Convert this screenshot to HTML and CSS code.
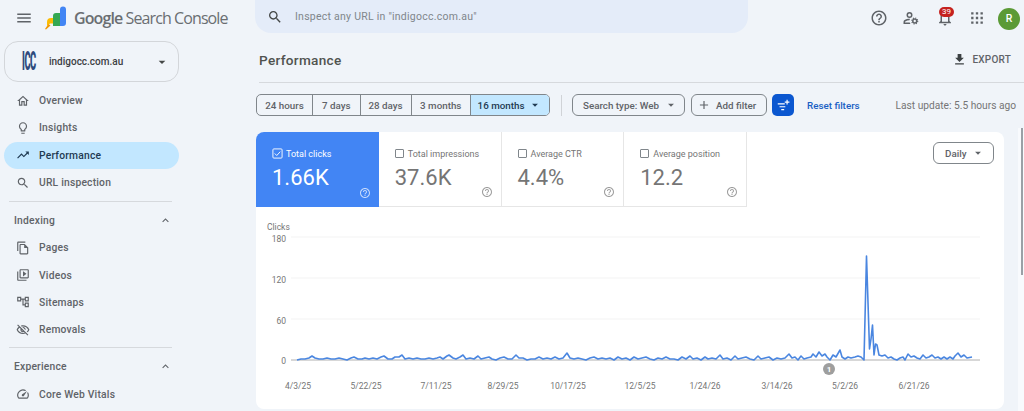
FILE: index.html
```html
<!DOCTYPE html>
<html lang="en">

<head>
  <meta charset="UTF-8" />
  <title>Performance - Google Search Console</title>
  <link rel="stylesheet" href="styles.css">
</head>

<body>
  <svg class="defs" width="0" height="0">
    <symbol id="caret" viewBox="0 0 24 24"><path d="M7 10l5 5 5-5z" /></symbol>
    <symbol id="chevron" viewBox="0 0 24 24"><path d="M12 8l-6 6 1.41 1.41L12 10.83l4.59 4.58L18 14z" /></symbol>
    <symbol id="help" viewBox="0 0 24 24"><path d="M11 18h2v-2h-2v2zm1-16C6.48 2 2 6.48 2 12s4.48 10 10 10 10-4.48 10-10S17.52 2 12 2zm0 18c-4.41 0-8-3.59-8-8s3.59-8 8-8 8 3.59 8 8-3.59 8-8 8zm0-14c-2.21 0-4 1.79-4 4h2c0-1.1.9-2 2-2s2 .9 2 2c0 2-3 1.75-3 5h2c0-2.25 3-2.5 3-5 0-2.21-1.79-4-4-4z" /></symbol>
  </svg>

  <div class="app">
    <aside class="sidebar">
      <div class="brand">
        <svg class="menu-icon" viewBox="0 0 24 24"><path d="M3 18h18v-2H3v2zm0-5h18v-2H3v2zm0-7v2h18V6H3z" /></svg>
        <svg class="logo" viewBox="0 0 24 24">
          <path fill="#fbbc04" d="M3 20l3-2.500h5V12H7a4 4 0 0 0-4 4z" />
          <path fill="#f29900" d="M1 23l3.500-5 2 1.500L2 23.500z" />
          <path fill="#34a853" d="M9 20V10a3 3 0 0 1 3-3h4v13z" />
          <path fill="#4285f4" d="M16 20V3.500a3 3 0 0 1 3-3 3 3 0 0 1 3 3V17a3 3 0 0 1-3 3z" />
        </svg>
        <span class="brand-name"><b>Google</b> Search Console</span>
      </div>

      <div class="property">
        <span class="property-logo">ICC</span>
        <span class="property-name">indigocc.com.au</span>
        <svg class="caret"><use href="#caret" /></svg>
      </div>

      <nav class="nav">
        <a class="nav-item">
          <svg viewBox="0 0 24 24"><path d="M12 5.690l5 4.500V18h-2v-6H9v6H7v-7.810l5-4.500M12 3L2 12h3v8h6v-6h2v6h6v-8h3L12 3z" /></svg>
          Overview
        </a>
        <a class="nav-item">
          <svg viewBox="0 0 24 24"><path d="M9 21c0 .55.45 1 1 1h4c.55 0 1-.45 1-1v-1H9v1zm3-19C8.140 2 5 5.140 5 9c0 2.380 1.190 4.470 3 5.740V17c0 .55.45 1 1 1h6c.55 0 1-.45 1-1v-2.260c1.810-1.270 3-3.360 3-5.740 0-3.860-3.140-7-7-7zm2.850 11.100l-.85.6V16h-4v-2.300l-.85-.6C7.800 12.160 7 10.630 7 9c0-2.760 2.240-5 5-5s5 2.240 5 5c0 1.630-.8 3.160-2.150 4.100z" /></svg>
          Insights
        </a>
        <a class="nav-item active">
          <svg viewBox="0 0 24 24"><path d="M16 6l2.290 2.290-4.880 4.880-4-4L2 16.590 3.410 18l6-6 4 4 6.300-6.290L22 12V6z" /></svg>
          Performance
        </a>
        <a class="nav-item">
          <svg viewBox="0 0 24 24"><path d="M15.500 14h-.79l-.28-.27C15.410 12.590 16 11.110 16 9.500 16 5.910 13.090 3 9.500 3S3 5.910 3 9.500 5.910 16 9.500 16c1.610 0 3.090-.59 4.230-1.570l.27.28v.79l5 4.990L20.490 19l-4.990-5zm-6 0C7.010 14 5 11.990 5 9.500S7.010 5 9.500 5 14 7.010 14 9.500 11.990 14 9.500 14z" /></svg>
          URL inspection
        </a>
      </nav>

      <div class="nav-group">
        <div class="nav-heading">Indexing <svg><use href="#chevron" /></svg></div>
        <a class="nav-item">
          <svg viewBox="0 0 24 24"><path d="M16 1H4c-1.100 0-2 .9-2 2v14h2V3h12V1zm-1 4H8c-1.100 0-1.990.9-1.990 2L6 21c0 1.100.89 2 1.990 2H19c1.100 0 2-.9 2-2V11l-6-6zM8 21V7h6v5h5v9H8z" /></svg>
          Pages
        </a>
        <a class="nav-item">
          <svg viewBox="0 0 24 24"><path d="M4 6H2v14c0 1.100.9 2 2 2h14v-2H4V6zm16-4H8c-1.100 0-2 .9-2 2v12c0 1.100.9 2 2 2h12c1.100 0 2-.9 2-2V4c0-1.100-.9-2-2-2zm0 14H8V4h12v12zM12 5.500v9l6-4.500z" /></svg>
          Videos
        </a>
        <a class="nav-item">
          <svg viewBox="0 0 24 24"><path d="M22 11V3h-7v3H9V3H2v8h7V8h2v10h4v3h7v-8h-7v3h-2V8h2v3h7zM7 9H4V5h3v4zm10 6h3v4h-3v-4zm0-10h3v4h-3V5z" /></svg>
          Sitemaps
        </a>
        <a class="nav-item">
          <svg viewBox="0 0 24 24"><path d="M12 6c3.790 0 7.170 2.130 8.820 5.500-.59 1.220-1.420 2.270-2.410 3.120l1.410 1.410c1.390-1.230 2.490-2.770 3.180-4.530C21.270 7.110 17 4 12 4c-1.270 0-2.490.2-3.640.57l1.650 1.650C10.660 6.090 11.320 6 12 6zm-1.070 1.140L13 9.210c.57.25 1.030.71 1.280 1.280l2.070 2.070c.08-.34.14-.7.14-1.070C16.500 9.010 14.480 7 12 7c-.37 0-.72.05-1.070.14zM2.010 3.870l2.680 2.680C3.060 7.830 1.770 9.530 1 11.500 2.730 15.890 7 19 12 19c1.520 0 2.980-.29 4.320-.82l3.420 3.420 1.410-1.410L3.420 2.450 2.010 3.870zm7.500 7.500l2.610 2.610c-.04.01-.08.02-.12.02-1.380 0-2.500-1.120-2.500-2.500 0-.05.01-.08.01-.13zm-3.400-3.400l1.750 1.750c-.23.55-.36 1.150-.36 1.780 0 2.480 2.020 4.500 4.500 4.500.63 0 1.230-.13 1.770-.36l.98.98c-.88.24-1.800.38-2.750.38-3.790 0-7.170-2.130-8.820-5.500.7-1.430 1.720-2.610 2.930-3.530z" /></svg>
          Removals
        </a>
      </div>

      <div class="nav-group">
        <div class="nav-heading">Experience <svg><use href="#chevron" /></svg></div>
        <a class="nav-item">
          <svg viewBox="0 0 24 24"><path d="M20.380 8.570l-1.230 1.850a8 8 0 0 1-.22 7.580H5.070A8 8 0 0 1 15.580 6.850l1.850-1.230A10 10 0 0 0 3.350 19a2 2 0 0 0 1.720 1h13.850a2 2 0 0 0 1.740-1 10 10 0 0 0-.27-10.440zm-9.790 6.840a2 2 0 0 0 2.830 0l5.660-8.490-8.490 5.660a2 2 0 0 0 0 2.830z" /></svg>
          Core Web Vitals
        </a>
      </div>
    </aside>

    <main class="main">
      <header class="topbar">
        <div class="search">
          <svg viewBox="0 0 24 24"><path d="M15.500 14h-.79l-.28-.27C15.410 12.590 16 11.110 16 9.500 16 5.910 13.090 3 9.500 3S3 5.910 3 9.500 5.910 16 9.500 16c1.610 0 3.090-.59 4.230-1.570l.27.28v.79l5 4.990L20.490 19l-4.990-5zm-6 0C7.010 14 5 11.990 5 9.500S7.010 5 9.500 5 14 7.010 14 9.500 11.990 14 9.500 14z" /></svg>
          Inspect any URL in "indigocc.com.au"
        </div>
        <div class="top-icons">
          <svg class="top-icon"><use href="#help" /></svg>
          <svg class="top-icon" viewBox="0 0 24 24">
            <path d="M10.670 13.020c-.22-.01-.44-.02-.67-.02-2.420 0-4.680.67-6.610 1.820-.88.52-1.390 1.500-1.390 2.530V20h9.260a7 7 0 0 1-.9-2H4v-.65c0-.35.17-.68.44-.83A10.900 10.900 0 0 1 10 15h.1c.1-.7.3-1.350.57-1.980zM10 12a4 4 0 1 0 0-8 4 4 0 0 0 0 8zm0-6a2 2 0 1 1 0 4 2 2 0 0 1 0-4z" />
            <circle cx="17" cy="16" r="2.600" fill="none" stroke="currentColor" stroke-width="2" />
            <circle cx="17" cy="16" r="4" fill="none" stroke="currentColor" stroke-width="1.500" stroke-dasharray="1.500 1.640" />
          </svg>
          <span class="bell">
            <svg class="top-icon" viewBox="0 0 24 24"><path d="M12 22c1.100 0 2-.9 2-2h-4c0 1.100.9 2 2 2zm6-6v-5c0-3.070-1.630-5.640-4.500-6.320V4c0-.83-.67-1.500-1.500-1.500s-1.500.67-1.500 1.500v.68C7.640 5.360 6 7.920 6 11v5l-2 2v1h16v-1l-2-2zm-2 1H8v-6c0-2.480 1.510-4.500 4-4.500s4 2.020 4 4.500v6z" /></svg>
            <span class="badge">39</span>
          </span>
          <svg class="top-icon apps" viewBox="0 0 12 12">
            <path d="M1 1h2v2H1zM5 1h2v2H5zM9 1h2v2H9zM1 5h2v2H1zM5 5h2v2H5zM9 5h2v2H9zM1 9h2v2H1zM5 9h2v2H5zM9 9h2v2H9z" />
          </svg>
          <span class="avatar">R</span>
        </div>
      </header>

      <div class="page-head">
        <h1>Performance</h1>
        <a class="export">
          <svg viewBox="0 0 24 24"><path d="M19 9h-4V3H9v6H5l7 7 7-7zM5 18v2h14v-2H5z" /></svg>
          EXPORT
        </a>
      </div>

      <div class="toolbar">
        <div class="ranges">
          <span class="range">24 hours</span>
          <span class="range">7 days</span>
          <span class="range">28 days</span>
          <span class="range">3 months</span>
          <span class="range selected">16 months <svg class="caret"><use href="#caret" /></svg></span>
        </div>
        <span class="tool-divider"></span>
        <span class="chip search-type">Search type: Web <svg class="caret"><use href="#caret" /></svg></span>
        <span class="chip add-filter">
          <svg viewBox="0 0 24 24"><path d="M19 13h-6v6h-2v-6H5v-2h6V5h2v6h6z" /></svg>
          Add filter
        </span>
        <span class="filter-btn">
          <svg viewBox="0 0 24 24"><path d="M3 9h12v2H3zM6 14h10v2H6zM9 19h5v2H9zM18 3h2v3h3v2h-3v3h-2V8h-3V6h3z" /></svg>
        </span>
        <a class="reset">Reset filters</a>
        <span class="updated">Last update: 5.5 hours ago</span>
      </div>

      <section class="card">
        <div class="card-top">
          <div class="metric on">
            <div class="metric-label">
              <svg class="check" viewBox="0 0 12 12">
                <rect x="1" y="1" width="10" height="10" rx="1" fill="none" stroke="currentColor" />
                <path d="M3 6l2.200 2.200L9 4" fill="none" stroke="currentColor" />
              </svg>
              Total clicks
            </div>
            <div class="metric-value">1.66K</div>
            <svg class="metric-help"><use href="#help" /></svg>
          </div>
          <div class="metric">
            <div class="metric-label"><span class="box"></span>Total impressions</div>
            <div class="metric-value">37.6K</div>
            <svg class="metric-help"><use href="#help" /></svg>
          </div>
          <div class="metric">
            <div class="metric-label"><span class="box"></span>Average CTR</div>
            <div class="metric-value">4.4%</div>
            <svg class="metric-help"><use href="#help" /></svg>
          </div>
          <div class="metric">
            <div class="metric-label"><span class="box"></span>Average position</div>
            <div class="metric-value">12.2</div>
            <svg class="metric-help"><use href="#help" /></svg>
          </div>
          <span class="chip daily">Daily <svg class="caret"><use href="#caret" /></svg></span>
        </div>

        <!-- viewBox uses page coordinates so the chart numbers read off the screenshot -->
        <svg class="chart" viewBox="256 208 748 201">
          <g class="grid">
            <line x1="291" y1="238" x2="980" y2="238" />
            <line x1="291" y1="279" x2="980" y2="279" />
            <line x1="291" y1="320" x2="980" y2="320" />
          </g>
          <line class="axis" x1="291" y1="361" x2="980" y2="361" />

          <text class="axis-title" x="267" y="231">Clicks</text>
          <g class="y-labels">
            <text x="286" y="242.500">180</text>
            <text x="286" y="283.500">120</text>
            <text x="286" y="324.500">60</text>
            <text x="286" y="365">0</text>
          </g>
          <g class="x-labels">
            <text x="298" y="390">4/3/25</text>
            <text x="366" y="390">5/22/25</text>
            <text x="436" y="390">7/11/25</text>
            <text x="503" y="390">8/29/25</text>
            <text x="568" y="390">10/17/25</text>
            <text x="640" y="390">12/5/25</text>
            <text x="705" y="390">1/24/26</text>
            <text x="777" y="390">3/14/26</text>
            <text x="845" y="390">5/2/26</text>
            <text x="914" y="390">6/21/26</text>
          </g>

          <polyline class="series" points="297,361 301,360 305,360 309,359 312,357 315,359 319,360 323,360 327,359 331,360 335,360 339,359 343,360 347,361 351,359 354,358 358,360 362,360 365,359 369,360 373,359 377,360 381,358 384,357 388,360 392,360 395,358 399,358 402,356 405,360 409,359 413,360 417,359 421,360 425,360 429,359 433,360 437,359 440,358 443,360 447,357 449,356 453,359 456,360 460,358 463,356 466,360 470,359 474,360 478,357 481,360 485,359 489,358 492,360 496,361 500,359 504,358 508,360 512,360 516,356 519,359 523,359 527,361 531,360 535,360 539,358 543,360 547,359 551,360 555,358 559,360 563,359 567,354 570,359 574,360 578,359 582,360 586,361 590,359 594,358 598,360 602,359 606,360 610,359 614,361 618,358 622,360 626,359 630,361 634,358 638,360 642,359 646,358 650,360 654,361 658,359 662,360 666,358 670,360 674,360 678,361 682,358 686,360 690,357 693,360 697,359 701,361 705,358 708,360 712,359 716,360 720,356 723,360 727,359 731,361 735,357 738,360 742,359 746,358 750,360 754,361 758,357 761,360 765,359 769,358 773,361 777,359 781,360 785,359 789,355 792,359 795,358 798,361 801,357 804,360 807,359 811,358 813,355 816,358 819,353 822,357 825,355 827,358 830,361 833,356 836,358 840,351 842,358 845,360 848,358 851,359 855,358 858,357 861,358 864,361 866.500,257 869.500,350 871,340 872.500,326 874,356 875.500,345 877,346 879,356 882,357 885,356 888,359 891,358 894,360 897,361 900,359 903,358 905,361 908,355 911,358 914,357 917,359 920,360 923,356 926,359 929,358 932,356 935,359 938,358 941,360 944,358 947,360 950,358 953,360 955,357 958,354 961,358 964,356 967,359 972,358" />

          <circle class="annotation" cx="829" cy="370" r="6" />
          <text class="annotation-num" x="829" y="373">1</text>
        </svg>
      </section>
    </main>
  </div>

  <div class="scrollbar"><span class="scroll-thumb"></span></div>
</body>

</html>
```

FILE: styles.css
```css
* {
  box-sizing: border-box;
}

body {
  margin: 0;
  height: 411px;
  overflow: hidden;
  background: #f0f4f9;
  color: #444746;
  font-family: Roboto, "Liberation Sans", sans-serif;
}

.defs {
  position: absolute;
}

svg {
  fill: currentColor;
}

.app {
  display: grid;
  grid-template-columns: 256px 1fr;
  height: 411px;
}

/* Sidebar */

.sidebar {
  padding-left: 4px;
  overflow: hidden;
}

.brand {
  display: flex;
  align-items: center;
  height: 41px;
  padding: 0 0 5px 11px;
}

.menu-icon {
  width: 18px;
  height: 18px;
  color: #5f6368;
}

.logo {
  width: 24px;
  height: 24px;
  margin-left: 11px;
  flex: none;
}

.brand-name {
  margin-left: 6px;
  font-family: "Open Sans", sans-serif;
  font-size: 16px;
  letter-spacing: -0.9px;
  color: #6a6e72;
  white-space: nowrap;
}

.brand-name b {
  font-weight: 600;
}

.property {
  display: flex;
  align-items: center;
  width: 175px;
  height: 41px;
  padding: 0 8px 0 16px;
  border: 1px solid #d3d6da;
  border-radius: 14px;
}

.property-logo {
  display: block;
  width: 13px;
  font-size: 11px;
  font-weight: 900;
  letter-spacing: -0.5px;
  color: #2f4a7c;
  transform: scale(0.85, 2.4);
}

.property-name {
  margin-left: 15px;
  font-size: 10px;
  font-weight: 500;
  color: #3c4043;
}

.property .caret {
  margin-left: auto;
  width: 16px;
  height: 16px;
}

.caret {
  width: 14px;
  height: 14px;
  flex: none;
}

.nav {
  padding-top: 5px;
}

.nav-item {
  display: flex;
  align-items: center;
  width: 175px;
  height: 27.300px;
  padding-left: 12px;
  border-radius: 14px;
  font-size: 10.300px;
  font-weight: 500;
  letter-spacing: 0.2px;
  color: #5f6368;
}

.nav-item svg {
  width: 14px;
  height: 14px;
  margin-right: 9px;
  flex: none;
}

.nav-item.active {
  background: #c2e7ff;
  color: #1f3a52;
}

.nav-group {
  width: 163px;
  margin: 5px 0 0 5px;
  padding-top: 5px;
  border-top: 1px solid #d6d9dd;
}

.nav-group + .nav-group {
  margin-top: 4px;
}

.nav-group .nav-item {
  margin-left: -5px;
}

.nav-heading {
  display: flex;
  align-items: center;
  justify-content: space-between;
  height: 27px;
  padding: 0 0 0 5px;
  font-size: 10.300px;
  font-weight: 500;
  letter-spacing: 0.2px;
  color: #5f6368;
}

.nav-heading svg {
  width: 13px;
  height: 13px;
}

/* Top bar */

.main {
  min-width: 0;
}

.topbar {
  display: flex;
  align-items: flex-start;
  height: 41px;
}

.search {
  display: flex;
  align-items: center;
  width: 493px;
  height: 33px;
  margin-left: -1px;
  padding-left: 12px;
  border-radius: 0 0 16px 16px;
  background: #e4ecf9;
  font-size: 10.500px;
  letter-spacing: 0.25px;
  color: #80868b;
}

.search svg {
  width: 16px;
  height: 16px;
  margin-right: 12px;
  color: #444746;
}

.top-icons {
  display: flex;
  align-items: center;
  gap: 14px;
  margin-left: auto;
  padding: 6px 4px 0 0;
}

.top-icon {
  display: block;
  width: 18px;
  height: 18px;
  color: #5f6368;
}

.apps {
  width: 14px;
  height: 14px;
  margin-left: 2px;
}

.bell {
  position: relative;
  margin-left: 2px;
}

.badge {
  position: absolute;
  top: -2px;
  left: 3px;
  width: 15px;
  height: 10px;
  border-radius: 5px;
  background: #c5221f;
  color: #fff;
  font-size: 8px;
  line-height: 10px;
  text-align: center;
}

.avatar {
  width: 22px;
  height: 22px;
  margin-top: 2px;
  border-radius: 50%;
  background: #5b9a36;
  color: #fff;
  font-size: 10.500px;
  font-weight: 500;
  line-height: 22px;
  text-align: center;
}

/* Page header */

.page-head {
  display: flex;
  align-items: center;
  justify-content: space-between;
  height: 42px;
  margin-left: 3px;
  padding-bottom: 4px;
  border-bottom: 1px solid #d6d9dd;
}

h1 {
  margin: 0;
  font-size: 13.600px;
  font-weight: 500;
  letter-spacing: 0.3px;
  color: #50534f;
}

.export {
  display: flex;
  align-items: center;
  gap: 6px;
  padding-right: 13px;
  font-size: 10px;
  font-weight: 500;
  letter-spacing: 0.2px;
  color: #5f6368;
}

.export svg {
  width: 15px;
  height: 15px;
  color: #3c4043;
}

/* Filters */

.toolbar {
  display: flex;
  align-items: center;
  height: 22px;
  margin: 11px 0 16px;
}

.ranges {
  display: grid;
  grid-template-columns: 55px 47.500px 51px 59.500px 1fr;
  width: 294px;
  height: 22px;
  border: 1px solid #80868b;
  border-radius: 5px;
  overflow: hidden;
}

.range {
  display: flex;
  align-items: center;
  justify-content: center;
  border-left: 1px solid #80868b;
  font-size: 9.800px;
  font-weight: 500;
  color: #5f6368;
  white-space: nowrap;
}

.range:first-child {
  border-left: 0;
}

.range.selected {
  gap: 4px;
  background: #c2e7ff;
  color: #1f3a52;
}

.tool-divider {
  width: 1px;
  height: 21px;
  margin: 0 10px 0 11px;
  background: #d0d3d7;
}

.chip {
  display: flex;
  align-items: center;
  height: 22px;
  border: 1px solid #80868b;
  border-radius: 6px;
  font-size: 9.800px;
  font-weight: 500;
  color: #5f6368;
  white-space: nowrap;
}

.search-type {
  width: 113px;
  padding-left: 10px;
  gap: 5px;
}

.add-filter {
  width: 76px;
  margin-left: 6px;
  padding-left: 5px;
  gap: 5px;
}

.add-filter svg {
  width: 14px;
  height: 14px;
}

.filter-btn {
  display: flex;
  align-items: center;
  justify-content: center;
  width: 22px;
  height: 22px;
  margin-left: 5px;
  border-radius: 5px;
  background: #0b57d0;
  color: #fff;
}

.filter-btn svg {
  width: 14px;
  height: 14px;
}

.reset {
  margin-left: 13px;
  font-size: 9.800px;
  font-weight: 500;
  color: #1a5fc4;
}

.updated {
  margin-left: auto;
  padding-right: 8px;
  font-size: 10.200px;
  color: #757575;
}

/* Metrics card */

.card {
  width: 748px;
  height: 277px;
  border-radius: 8px;
  background: #fff;
  overflow: hidden;
}

.card-top {
  display: flex;
  align-items: flex-start;
}

.metric {
  position: relative;
  width: 122.750px;
  height: 75px;
  padding: 15px 0 0 16px;
  border-right: 1px solid #e6e6e6;
  border-bottom: 1px solid #e6e6e6;
  color: #757575;
}

.metric.on {
  border: 0;
  background: #4285f4;
  color: #fff;
}

.metric-label {
  display: flex;
  align-items: center;
  gap: 4px;
  height: 13px;
  font-size: 9px;
}

.box {
  width: 9px;
  height: 9px;
  border: 1px solid #80868b;
  border-radius: 1px;
}

.check {
  width: 11px;
  height: 11px;
  margin-right: -1px;
}

.metric-value {
  margin-top: 3px;
  font-size: 22px;
  line-height: 29px;
}

.metric-help {
  position: absolute;
  right: 8px;
  bottom: 8px;
  width: 12px;
  height: 12px;
  opacity: 0.7;
}

.daily {
  width: 61px;
  margin: 10px 10px 0 auto;
  padding-left: 11px;
  gap: 5px;
}

/* Chart */

.chart {
  display: block;
  width: 748px;
  height: 201px;
  fill: none;
}

.grid line {
  stroke: #f3f3f3;
}

.axis {
  stroke: #b0b0b0;
}

.axis-title,
.y-labels text,
.x-labels text {
  fill: #757575;
  font-size: 8.500px;
}

.y-labels text {
  text-anchor: end;
}

.x-labels text {
  text-anchor: middle;
}

.series {
  fill: none;
  stroke: #4a86e0;
  stroke-width: 1.600;
  stroke-linejoin: round;
}

.annotation {
  fill: #9e9e9e;
}

.annotation-num {
  fill: #fff;
  font-size: 8px;
  font-weight: 700;
  text-anchor: middle;
}

.scrollbar {
  position: absolute;
  top: 128px;
  right: 0;
  bottom: 0;
  width: 6px;
  background: #f8fafd;
}

.scroll-thumb {
  display: block;
  width: 2px;
  height: 147px;
  margin-left: 3px;
  background: #9aa0a6;
}
```
